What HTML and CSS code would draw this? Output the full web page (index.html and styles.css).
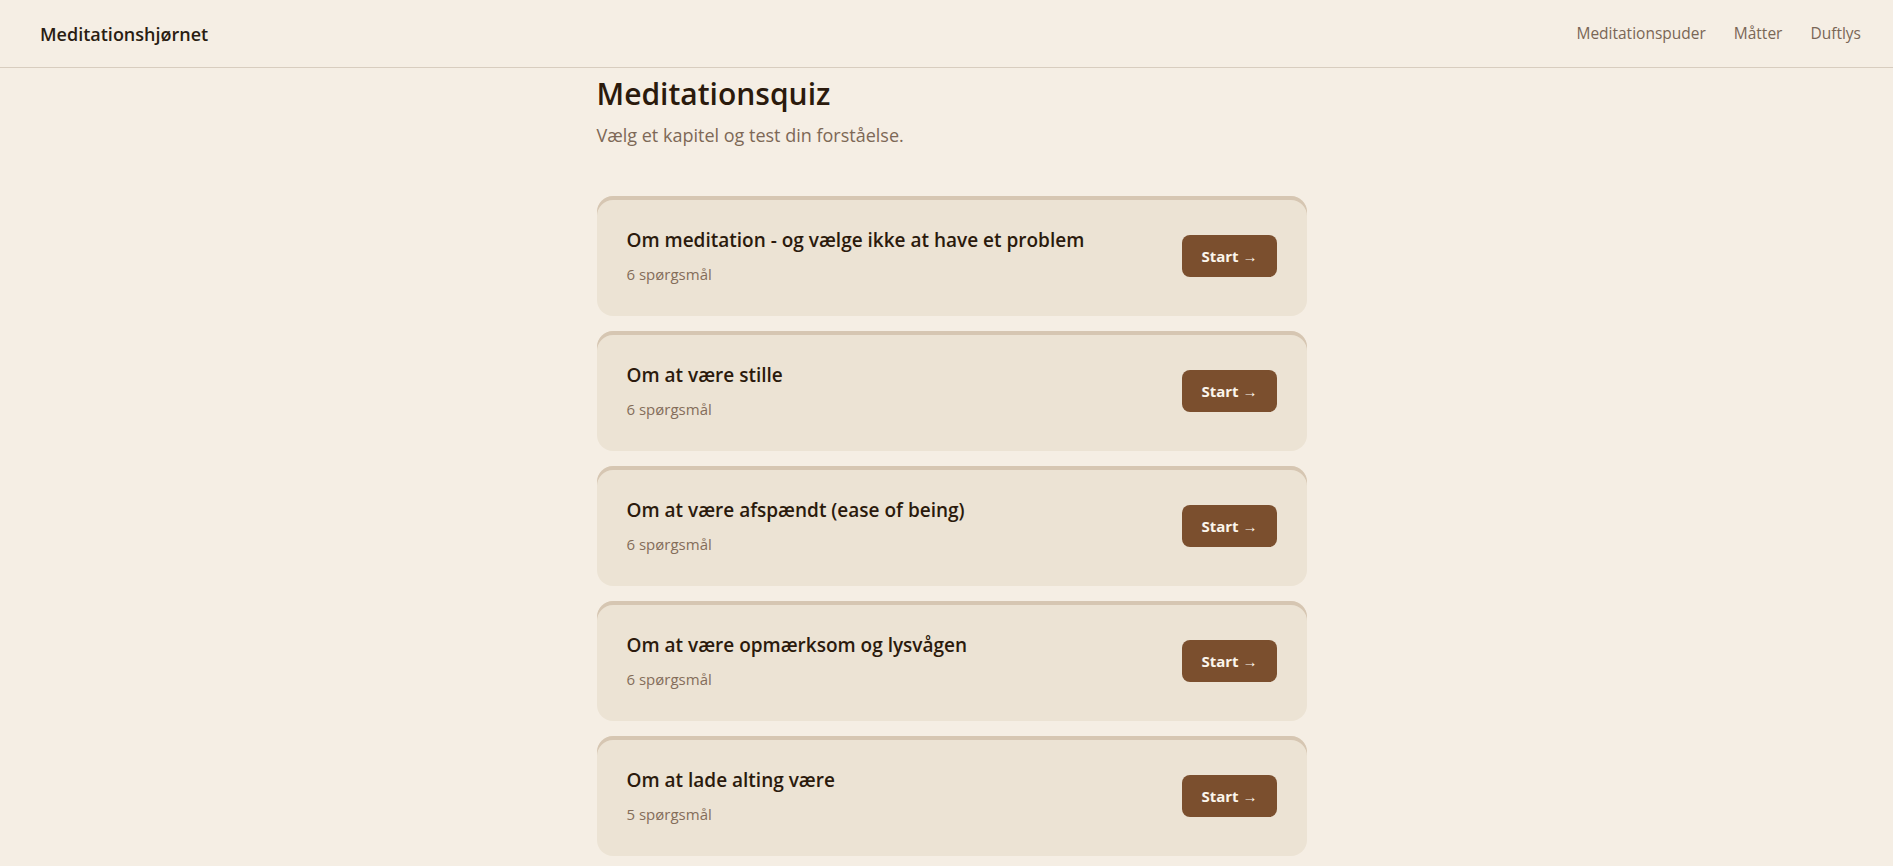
FILE: index.html
```html
<!DOCTYPE html>
<html lang="da">
<head>
<meta charset="utf-8">
<title>Meditationsquiz</title>
<link rel="stylesheet" href="styles.css">
</head>
<body>
<header class="topbar">
  <a class="brand" href="#">Meditationshjørnet</a>
  <nav class="nav">
    <a href="#">Meditationspuder</a>
    <a href="#">Måtter</a>
    <a href="#">Duftlys</a>
  </nav>
</header>
<main class="page">
  <h1 class="title">Meditationsquiz</h1>
  <p class="lead">Vælg et kapitel og test din forståelse.</p>
  <ul class="chapters">
    <li class="card">
      <div class="card-text">
        <h2 class="card-title">Om meditation - og vælge ikke at have et problem</h2>
        <p class="card-meta">6 spørgsmål</p>
      </div>
      <a class="btn" href="#">Start →</a>
    </li>
    <li class="card">
      <div class="card-text">
        <h2 class="card-title">Om at være stille</h2>
        <p class="card-meta">6 spørgsmål</p>
      </div>
      <a class="btn" href="#">Start →</a>
    </li>
    <li class="card">
      <div class="card-text">
        <h2 class="card-title">Om at være afspændt (ease of being)</h2>
        <p class="card-meta">6 spørgsmål</p>
      </div>
      <a class="btn" href="#">Start →</a>
    </li>
    <li class="card">
      <div class="card-text">
        <h2 class="card-title">Om at være opmærksom og lysvågen</h2>
        <p class="card-meta">6 spørgsmål</p>
      </div>
      <a class="btn" href="#">Start →</a>
    </li>
    <li class="card">
      <div class="card-text">
        <h2 class="card-title">Om at lade alting være</h2>
        <p class="card-meta">5 spørgsmål</p>
      </div>
      <a class="btn" href="#">Start →</a>
    </li>
  </ul>
</main>
</body>
</html>
```

FILE: styles.css
```css
* { box-sizing: border-box; }

html, body {
  margin: 0;
  padding: 0;
}

body {
  background: #f5eee4;
  color: #2b1d10;
  font-family: "Open Sans", "Noto Sans", "Liberation Sans", sans-serif;
}

a { text-decoration: none; color: inherit; }

.topbar {
  height: 68px;
  display: flex;
  align-items: center;
  justify-content: space-between;
  padding: 0 32px 0 40px;
  border-bottom: 1px solid #d8cdbf;
}

.brand {
  font-size: 18px;
  font-weight: 600;
  color: #2a1d12;
  line-height: 1;
}

.nav {
  display: flex;
  gap: 28px;
}

.nav a {
  font-size: 15.5px;
  color: #7a6656;
  line-height: 1;
}

.page {
  max-width: 720px;
  margin: 0 auto;
  padding: 6px 0 40px 10px;
}

.title {
  margin: 0;
  font-size: 30px;
  line-height: 40px;
  font-weight: 600;
  color: #2b1a0c;
}

.lead {
  margin: 8px 0 0;
  font-size: 18px;
  line-height: 27px;
  color: #7d6856;
}

.chapters {
  list-style: none;
  margin: 47px 0 0;
  padding: 0;
  display: flex;
  flex-direction: column;
  gap: 15px;
}

.card {
  display: flex;
  align-items: center;
  justify-content: space-between;
  padding: 30px 30px 31px;
  background: #ece3d4;
  border-radius: 16px;
  box-shadow: inset 0 4px 0 #d6c6b2;
}

.card-text {
  display: flex;
  flex-direction: column;
  gap: 10px;
}

.card-title {
  margin: 0;
  font-size: 19px;
  line-height: 28px;
  font-weight: 600;
  color: #2b1a0c;
}

.card-meta {
  margin: 0;
  font-size: 15px;
  line-height: 21px;
  color: #846d5a;
}

.btn {
  display: inline-block;
  padding: 10px 19px;
  font-size: 15px;
  line-height: 22px;
  font-weight: 700;
  color: #fbf5ec;
  background: #7b4f2e;
  border-radius: 8px;
}
```
